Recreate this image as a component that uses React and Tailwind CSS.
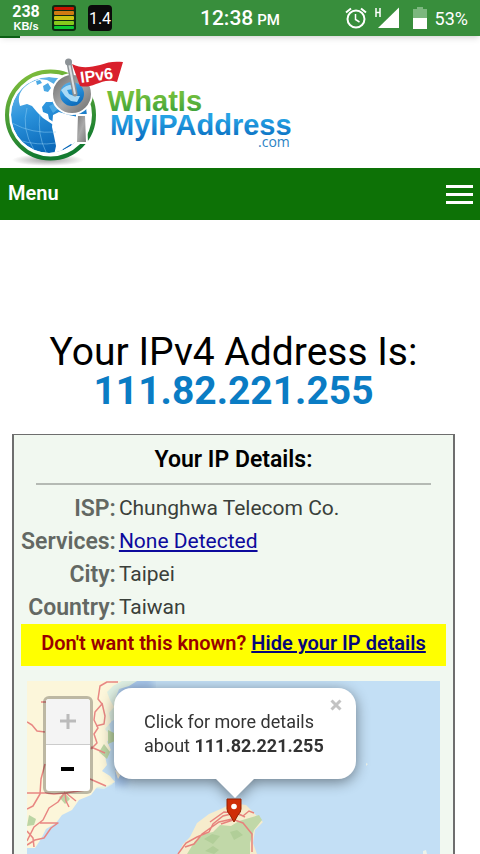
import React, { useState } from "react";

const details = [
  { label: "ISP", value: "Chunghwa Telecom Co." },
  { label: "Services", value: "None Detected", href: "#services" },
  { label: "City", value: "Taipei" },
  { label: "Country", value: "Taiwan" },
];

const ip = "111.82.221.255";

const StatusBar = () => (
  <div className="relative z-10 grid grid-cols-[1fr_auto_1fr] items-center h-9 bg-[#388e3c] text-white shadow-md">
    <div className="flex items-center gap-3 pl-3">
      <div className="w-7 flex flex-col items-center">
        <span className="font-['Liberation_Sans_Narrow','Roboto',sans-serif] text-base leading-4 font-bold">
          238
        </span>
        <span className="font-['Liberation_Sans',sans-serif] text-[11px] leading-3 font-bold">
          KB/s
        </span>
      </div>
      <svg viewBox="0 0 24 26" className="w-6 h-[26px]">
        <rect width="24" height="26" rx="3" fill="#0c2a10" />
        <rect x="2" y="2" width="20" height="3" rx="1" fill="#c81400" />
        <rect x="2" y="6" width="20" height="4" rx="1" fill="#cf7a12" />
        <rect x="2" y="11" width="20" height="4" rx="1" fill="#c9c412" />
        <rect x="2" y="16" width="20" height="4" rx="1" fill="#86c81c" />
        <rect x="2" y="21" width="20" height="3" rx="1" fill="#0cc832" />
      </svg>
      <span className="w-6 h-[26px] rounded bg-[#0b0b0b] text-base leading-7 text-center">
        1.4
      </span>
    </div>

    <div className="flex items-baseline gap-1 pt-0.5 font-medium">
      <span className="text-[21px]">12:38</span>
      <span className="text-[15px]">PM</span>
    </div>

    <div className="flex items-center justify-end pr-3">
      <svg viewBox="0 0 22 22" className="w-[22px] h-[22px]" fill="none" stroke="#fff">
        <circle cx="11" cy="12" r="8.500" strokeWidth="2" />
        <path d="M10.500 7v5.500l4 2.500" strokeWidth="1.500" />
        <path d="M1 5.500l5-4M21 5.500l-5-4" strokeWidth="2" />
      </svg>
      <svg viewBox="0 0 26 22" className="w-[26px] h-[22px] ml-2">
        <path d="M24 0.500V21H3z" fill="#fff" />
        <path d="M1 1v9M5 1v9M1 5.500h4" stroke="#fff" strokeWidth="1.500" />
      </svg>
      <svg viewBox="0 0 14 22" className="w-3.5 h-[22px] ml-3">
        <path d="M4 0h6v2h4v9H0V2h4z" fill="#7cb77f" />
        <path d="M0 11h14v11H0z" fill="#fff" />
      </svg>
      <span className="ml-2 pt-0.5 text-lg">53%</span>
    </div>
    <div className="absolute left-0 top-full w-5 h-0.5 bg-[#0c5f14]" />
  </div>
);

const Logo = () => (
  <svg viewBox="0 0 300 132" className="w-[300px] h-[132px]" role="img" aria-label="WhatIsMyIPAddress.com">
    <defs>
      <linearGradient id="ring" x1="0" y1="0" x2="0.3" y2="1">
        <stop offset="0" stopColor="#86c23c" />
        <stop offset="1" stopColor="#127a30" />
      </linearGradient>
      <linearGradient id="sea" x1="0" y1="0" x2="0.4" y2="1">
        <stop offset="0" stopColor="#7cc4ee" />
        <stop offset="0.5" stopColor="#2b93dc" />
        <stop offset="1" stopColor="#0a68b8" />
      </linearGradient>
      <linearGradient id="leaf" x1="0" y1="0" x2="0" y2="1">
        <stop offset="0.3" stopColor="#72be3c" />
        <stop offset="1" stopColor="#2f9a3a" />
      </linearGradient>
      <linearGradient id="wave" x1="0" y1="0" x2="0" y2="1">
        <stop offset="0.3" stopColor="#25a2e4" />
        <stop offset="1" stopColor="#0667bb" />
      </linearGradient>
      <linearGradient id="metal" x1="0" y1="0" x2="1" y2="1">
        <stop offset="0" stopColor="#777" />
        <stop offset="0.5" stopColor="#aaa" />
        <stop offset="1" stopColor="#777" />
      </linearGradient>
      <radialGradient id="floor">
        <stop offset="0" stopColor="#777" stopOpacity="0.7" />
        <stop offset="1" stopColor="#777" stopOpacity="0" />
      </radialGradient>
      <clipPath id="globe">
        <circle cx="49" cy="79" r="38" />
      </clipPath>
    </defs>

    <ellipse cx="48" cy="124" rx="36" ry="6" fill="url(#floor)" />
    <circle cx="50.500" cy="79" r="43.500" fill="#fff" stroke="url(#ring)" strokeWidth="4" />
    <g clipPath="url(#globe)">
      <circle cx="49" cy="79" r="38" fill="url(#sea)" />
      <path
        d="M19 66c-1-8 3-14 11-19l9-4 8 1 7 4 4 6-1 8-5 4-6 0-4 5 1 5 5 2 1 5 6 4 2 3-5-2-9-6-6-6-5-6-5-2-7 2z"
        fill="#fff"
      />
      <path
        d="M53 79l6-3 10 3 9 2 14-5v38l-14 0-7-6-8 5-5 9-4-3 2-9-2-10-2-9z"
        fill="#fff"
      />
      <path d="M43 50l5-3 3 5-3 4-4-1zM49 70l6-3 3 6-5 4zM36 45l4-1 2 3-5 2z" fill="#4ba8e4" />
      <path
        d="M12 87q20 11 44 9M18 104q20 6 38 3M27 72q-6 20 7 42M40 78q-3 20 6 38"
        fill="none"
        stroke="#8fd0f5"
        strokeOpacity="0.5"
      />
    </g>
    <path d="M77 79h9l1 28H76z" fill="url(#metal)" stroke="#fff" strokeWidth="2" />
    <circle cx="72" cy="58" r="21" fill="#fff" />
    <circle cx="72" cy="58" r="15.500" fill="url(#sea)" stroke="url(#metal)" strokeWidth="7" />
    <path d="M61 54c4-5 10-6 14-5l-2 4-6 1 2 4 5 2 6 0-3 6-6-1-6-5z" fill="#a8daf6" />
    <path d="M69 27l6 31" stroke="#8c9296" strokeWidth="5" strokeLinecap="round" />
    <path d="M69 27l6 31" stroke="#dde1e3" strokeWidth="2" />
    <circle cx="68.500" cy="26" r="3.500" fill="#8c9296" />
    <path d="M72 28c10 5 19 3 28 1 8-3 14-4 23-3l-6 20c-9-3-15 0-21 2-7 3-12 3-16 2z" fill="#d9202c" />
    <text x="81" y="47" transform="rotate(-8 81 47)" className="font-['Liberation_Sans',sans-serif] text-base font-bold" fill="#fff">
      IPv6
    </text>

    <text x="107" y="75" className="font-['Liberation_Sans',sans-serif] text-[29px] font-bold" fill="url(#leaf)">
      WhatIs
    </text>
    <text x="110" y="99" className="font-['Liberation_Sans',sans-serif] text-[29px] font-bold" fill="url(#wave)">
      MyIPAddress
    </text>
    <text x="258" y="111" className="font-['Open_Sans',sans-serif] text-sm font-medium" fill="#2c83c4">
      .com
    </text>
  </svg>
);

const MapDrawing = () => (
  <svg viewBox="0 0 413 173" preserveAspectRatio="xMinYMin slice" className="absolute inset-0 w-full h-full">
    <defs>
      <filter id="shoal">
        <feGaussianBlur stdDeviation="3" />
      </filter>
    </defs>
    <rect width="413" height="173" fill="#c3dff5" />
    <path
      d="M125 0L100 10 94 40 96 75 92 105"
      fill="none"
      stroke="#a5c5ea"
      strokeWidth="16"
      filter="url(#shoal)"
    />
    <path
      d="M0 0h110l-8 5-10 3-3 8 5 6-6 6 2 9-8 5 2 9-6 5 5 11-9 5 3 8-8 3 2 9 9 3 6 8-9 5-11-1-9 8-12 3-4 10-12 6-5 9-9 6-4 10-11 5-2 9H0z"
      fill="#dff0e4"
    />
    <path
      d="M0 0h95l-9 5-6 6 3 8 4 7-5 6 2 9-6 7 6 7-4 6 4 8-6 6 2 9-5 6 8 5 5 6-8 4-10 1-6 8-12 5-7 10-10 5-6 8-10 6-5 10-6 9H0z"
      fill="#fcf6da"
    />
    <path d="M81 49l6 3 1 8-7 3zM77 63l6 8-3 7-8-7zM2 134l7 4-2 6-7 1zM32 116l6-4 5 6-5 5z" fill="#bcd5a4" />
    <path d="M98 21l4 5-3 5-4-4zM99 36l5 4-4 7zM88 89l6 4-3 5zM92 15l5-3-2 8zM89 57l4 5-4 5z" fill="#f8f0dc" />
    <g fill="none" stroke="#e88783" strokeWidth="1.500" strokeLinejoin="round">
      <path d="M91 1H80l-7 4-2 13 4 5-7 8-1 8 4 8-4 6 3 9-6 6M75 22l3 13-1 8-8 2M0 41l5 3 5 6 8 1M64 66l14 6M14 21h10M63 98l16 7" />
      <path d="M0 112h18l9 1 11-1 21-3M18 83l-4 15-1 15-7 12-6 3M38 111l-7 10-9 6-6 12-9 7-7 14M38 112l1 8 3 6M39 112l10 8M13 142h18l-7 5-7 10-9 2-8 5M0 150l6 7 1 9" />
    </g>

    <path
      d="M151 173l5-10 7-7 7-14 12-9 14-6 9-5 14 2 7 7 10 10-8 8-2 13 4 11z"
      fill="#f6eccd"
    />
    <path d="M160 173l8-13 9-7 9-2 7-7 11 1 8-5 20-6 3 5-8 10-4 13v11z" fill="#c1d8a8" />
    <path d="M177 158l8-5 8 2-7 8zM203 151l7-2 6 5-9 5zM178 170l8-5 6 4-5 4z" fill="#b1ce98" />
    <g fill="none" stroke="#e7827c" strokeWidth="1.500">
      <path d="M151 173l8-11 11-6 12-5 4-8 10-8 12-3 8 3 6-5 5 2M158 166l9-3 8-10 17-12 13-3 11 4 9 11v18M183 141l14-10 13 1 8 4M194 143l12-4" />
    </g>
    <path d="M339 82l2 1-2 2zM396 170l3-1 1 4h-4z" fill="#edf3ea" />
  </svg>
);

const App = () => {
  const [popupOpen, setPopupOpen] = useState(true);

  return (
    <div className="flex flex-col min-h-screen bg-white font-['Roboto',sans-serif]">
      <StatusBar />

      <header>
        <Logo />
      </header>

      <nav className="h-[52px] flex items-center justify-between pl-2 pr-[7px] bg-[#0d7206] text-white">
        <span className="pb-0.5 text-xl font-semibold">Menu</span>
        <button aria-label="Open menu" className="flex flex-col gap-[5px]">
          <span className="w-[27px] h-[3px] bg-white" />
          <span className="w-[27px] h-[3px] bg-white" />
          <span className="w-[27px] h-[3px] bg-white" />
        </button>
      </nav>

      <main className="flex-1 flex flex-col pl-3 pr-[25px] pt-[113px]">
        <h1 className="text-[39px] leading-[39px] text-center text-black">
          Your IPv4 Address Is:
          <a href="#ip" className="block font-bold text-[#0a7cc4]">
            {ip}
          </a>
        </h1>

        <section className="flex-1 flex flex-col mt-[23px] px-[7px] border-x-2 border-t border-[#6e6e6e] bg-[#f1f8f0]">
          <h2 className="mx-[15px] h-[50px] pt-[9px] text-[23px] leading-8 font-semibold text-center text-black border-b-2 border-[#b5bab4]">
            Your IP Details:
          </h2>

          <table className="mt-[7px] w-full text-[21px] leading-[33px]">
            <tbody>
              {details.map(({ label, value, href }) => (
                <tr key={label}>
                  <th scope="row" className="w-[94px] p-0 text-right text-[23px] font-semibold text-[#636863]">
                    {label}:
                  </th>
                  <td className="py-0 pl-[3px] text-[#3a403a]">
                    {href ? (
                      <a href={href} className="text-[#0d0a9c] underline">
                        {value}
                      </a>
                    ) : (
                      value
                    )}
                  </td>
                </tr>
              ))}
            </tbody>
          </table>

          <p className="h-[42px] bg-[#ffff00] text-xl leading-[38px] font-semibold text-center text-[#990000]">
            Don't want this known?{" "}
            <a href="#hide" className="text-[#06067a] underline">
              Hide your IP details
            </a>
          </p>

          <div className="relative flex-1 min-h-40 mt-[15px] ml-1.5 mr-1.5 overflow-hidden">
            <MapDrawing />

            <div className="absolute left-4 top-[15px] w-[50px] rounded-md border-[3px] border-black/25 bg-white bg-clip-padding overflow-hidden">
              <button
                aria-label="Zoom in"
                disabled
                className="flex w-full h-[46px] items-center justify-center border-b border-[#ccc] bg-[#f4f4f4] text-[#bbb]"
              >
                <svg viewBox="0 0 16 16" className="w-4 h-4">
                  <path d="M0 7h16M8 0v15" stroke="currentColor" strokeWidth="3" />
                </svg>
              </button>
              <button aria-label="Zoom out" className="flex w-full h-[46px] items-center justify-center text-black">
                <svg viewBox="0 0 16 16" className="w-4 h-4">
                  <path d="M1 9h13" stroke="currentColor" strokeWidth="4" />
                </svg>
              </button>
            </div>

            {popupOpen && (
              <div className="absolute left-[87px] top-[7px] w-[242px] drop-shadow-[0_3px_7px_rgba(0,0,0,0.45)]">
                <div className="relative h-[91px] rounded-[18px] bg-white pl-[30px] pt-[22px] text-lg leading-6 text-[#333]">
                  Click for more details
                  <br />
                  about <b>{ip}</b>
                  <button
                    aria-label="Close popup"
                    onClick={() => setPopupOpen(false)}
                    className="absolute right-[14px] top-[11px] text-[#c3c3c3]"
                  >
                    <svg viewBox="0 0 12 12" className="w-3 h-3">
                      <path d="M1.500 1.500l9 9M10.500 1.500l-9 9" stroke="currentColor" strokeWidth="3" />
                    </svg>
                  </button>
                </div>
                <svg viewBox="0 0 38 19" className="w-[38px] h-[19px] mx-auto">
                  <path d="M0 0h38L19 19z" fill="#fff" />
                </svg>
              </div>
            )}

            <svg viewBox="0 0 16 25" className="absolute left-[199px] top-[117px] w-4 h-[25px]">
              <path d="M1 1h14v10q0 3-3 6l-4 7-4-7q-3-3-3-6z" fill="#cf2e08" stroke="#922000" />
              <circle cx="8" cy="8.500" r="2.800" fill="#fff" />
            </svg>
          </div>
        </section>
      </main>
    </div>
  );
};

export default App;
